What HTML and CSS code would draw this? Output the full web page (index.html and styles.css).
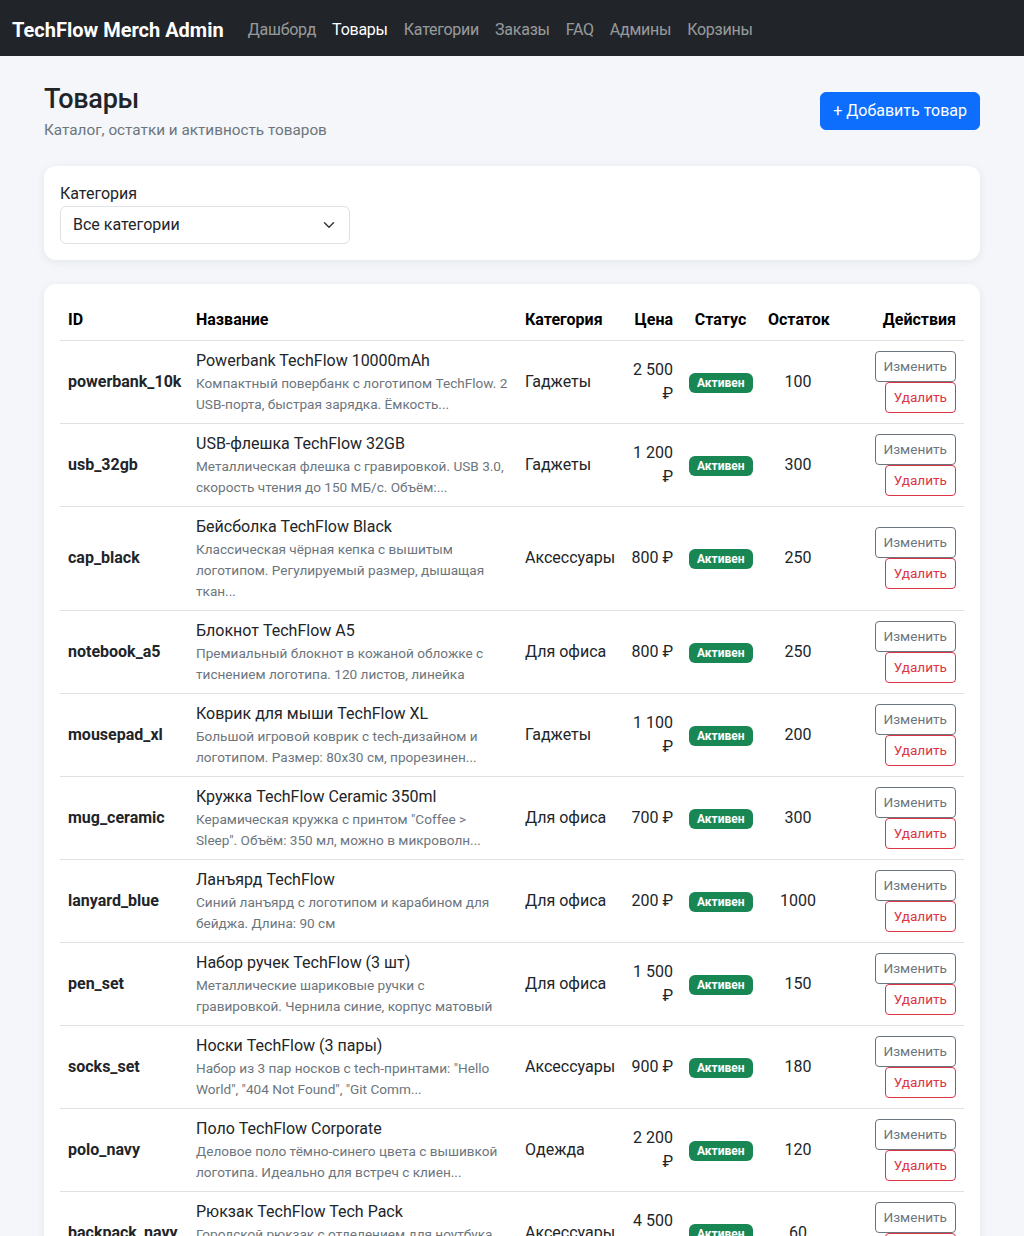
FILE: index.html
```html
<!DOCTYPE html>
<html lang="ru">
<head>
<meta charset="utf-8">
<title>TechFlow Merch Admin — Товары</title>
<link rel="stylesheet" href="styles.css">
</head>
<body>
<nav class="navbar">
  <a class="brand" href="#">TechFlow Merch Admin</a>
  <ul class="nav">
    <li><a href="#">Дашборд</a></li>
    <li><a href="#" class="active">Товары</a></li>
    <li><a href="#">Категории</a></li>
    <li><a href="#">Заказы</a></li>
    <li><a href="#">FAQ</a></li>
    <li><a href="#">Админы</a></li>
    <li><a href="#">Корзины</a></li>
  </ul>
</nav>

<main class="container">
  <header class="page-head">
    <div>
      <h1 class="page-title">Товары</h1>
      <p class="page-sub">Каталог, остатки и активность товаров</p>
    </div>
    <button class="btn-primary">+ Добавить товар</button>
  </header>

  <section class="card filter-card">
    <label class="form-label">Категория</label>
    <div class="select-box">
      <span>Все категории</span>
      <svg class="chev" width="16" height="12" viewBox="0 0 16 16"><path d="m2 5 6 6 6-6" fill="none" stroke="#343a40" stroke-width="2" stroke-linecap="round" stroke-linejoin="round"/></svg>
    </div>
  </section>

  <section class="card table-card">
    <table class="table">
      <colgroup>
        <col class="c-id"><col class="c-name"><col class="c-cat"><col class="c-price"><col class="c-status"><col class="c-stock"><col class="c-act">
      </colgroup>
      <thead>
        <tr><th>ID</th><th>Название</th><th>Категория</th><th class="end price">Цена</th><th class="center">Статус</th><th class="center">Остаток</th><th class="end">Действия</th></tr>
      </thead>
      <tbody>
        <tr>
          <td class="id">powerbank_10k</td>
          <td><div class="pname">Powerbank TechFlow 10000mAh</div><div class="pdesc">Компактный повербанк с логотипом TechFlow. 2 USB-порта, быстрая зарядка. Ёмкость...</div></td>
          <td>Гаджеты</td><td class="end price">2&nbsp;500 ₽</td>
          <td class="center"><span class="badge">Активен</span></td><td class="center">100</td>
          <td class="end"><div class="acts"><button class="btn-sm edit">Изменить</button><button class="btn-sm del">Удалить</button></div></td>
        </tr>
        <tr>
          <td class="id">usb_32gb</td>
          <td><div class="pname">USB-флешка TechFlow 32GB</div><div class="pdesc">Металлическая флешка с гравировкой. USB 3.0, скорость чтения до 150 МБ/с. Объём:...</div></td>
          <td>Гаджеты</td><td class="end price">1&nbsp;200 ₽</td>
          <td class="center"><span class="badge">Активен</span></td><td class="center">300</td>
          <td class="end"><div class="acts"><button class="btn-sm edit">Изменить</button><button class="btn-sm del">Удалить</button></div></td>
        </tr>
        <tr>
          <td class="id">cap_black</td>
          <td><div class="pname">Бейсболка TechFlow Black</div><div class="pdesc">Классическая чёрная кепка с вышитым логотипом. Регулируемый размер, дышащая ткан...</div></td>
          <td>Аксессуары</td><td class="end price">800 ₽</td>
          <td class="center"><span class="badge">Активен</span></td><td class="center">250</td>
          <td class="end"><div class="acts"><button class="btn-sm edit">Изменить</button><button class="btn-sm del">Удалить</button></div></td>
        </tr>
        <tr>
          <td class="id">notebook_a5</td>
          <td><div class="pname">Блокнот TechFlow A5</div><div class="pdesc">Премиальный блокнот в кожаной обложке с тиснением логотипа. 120 листов, линейка</div></td>
          <td>Для офиса</td><td class="end price">800 ₽</td>
          <td class="center"><span class="badge">Активен</span></td><td class="center">250</td>
          <td class="end"><div class="acts"><button class="btn-sm edit">Изменить</button><button class="btn-sm del">Удалить</button></div></td>
        </tr>
        <tr>
          <td class="id">mousepad_xl</td>
          <td><div class="pname">Коврик для мыши TechFlow XL</div><div class="pdesc">Большой игровой коврик с tech-дизайном и логотипом. Размер: 80x30 см, прорезинен...</div></td>
          <td>Гаджеты</td><td class="end price">1&nbsp;100 ₽</td>
          <td class="center"><span class="badge">Активен</span></td><td class="center">200</td>
          <td class="end"><div class="acts"><button class="btn-sm edit">Изменить</button><button class="btn-sm del">Удалить</button></div></td>
        </tr>
        <tr>
          <td class="id">mug_ceramic</td>
          <td><div class="pname">Кружка TechFlow Ceramic 350ml</div><div class="pdesc">Керамическая кружка с принтом "Coffee &gt; Sleep". Объём: 350 мл, можно в микроволн...</div></td>
          <td>Для офиса</td><td class="end price">700 ₽</td>
          <td class="center"><span class="badge">Активен</span></td><td class="center">300</td>
          <td class="end"><div class="acts"><button class="btn-sm edit">Изменить</button><button class="btn-sm del">Удалить</button></div></td>
        </tr>
        <tr>
          <td class="id">lanyard_blue</td>
          <td><div class="pname">Ланъярд TechFlow</div><div class="pdesc">Синий ланъярд с логотипом и карабином для бейджа. Длина: 90 см</div></td>
          <td>Для офиса</td><td class="end price">200 ₽</td>
          <td class="center"><span class="badge">Активен</span></td><td class="center">1000</td>
          <td class="end"><div class="acts"><button class="btn-sm edit">Изменить</button><button class="btn-sm del">Удалить</button></div></td>
        </tr>
        <tr>
          <td class="id">pen_set</td>
          <td><div class="pname">Набор ручек TechFlow (3 шт)</div><div class="pdesc">Металлические шариковые ручки с гравировкой. Чернила синие, корпус матовый</div></td>
          <td>Для офиса</td><td class="end price">1&nbsp;500 ₽</td>
          <td class="center"><span class="badge">Активен</span></td><td class="center">150</td>
          <td class="end"><div class="acts"><button class="btn-sm edit">Изменить</button><button class="btn-sm del">Удалить</button></div></td>
        </tr>
        <tr>
          <td class="id">socks_set</td>
          <td><div class="pname">Носки TechFlow (3 пары)</div><div class="pdesc">Набор из 3 пар носков с tech-принтами: "Hello World", "404 Not Found", "Git Comm...</div></td>
          <td>Аксессуары</td><td class="end price">900 ₽</td>
          <td class="center"><span class="badge">Активен</span></td><td class="center">180</td>
          <td class="end"><div class="acts"><button class="btn-sm edit">Изменить</button><button class="btn-sm del">Удалить</button></div></td>
        </tr>
        <tr>
          <td class="id">polo_navy</td>
          <td><div class="pname">Поло TechFlow Corporate</div><div class="pdesc">Деловое поло тёмно-синего цвета с вышивкой логотипа. Идеально для встреч с клиен...</div></td>
          <td>Одежда</td><td class="end price">2&nbsp;200 ₽</td>
          <td class="center"><span class="badge">Активен</span></td><td class="center">120</td>
          <td class="end"><div class="acts"><button class="btn-sm edit">Изменить</button><button class="btn-sm del">Удалить</button></div></td>
        </tr>
        <tr>
          <td class="id">backpack_navy</td>
          <td><div class="pname">Рюкзак TechFlow Tech Pack</div><div class="pdesc">Городской рюкзак с отделением для ноутбука 15.6". Водоотталкивающая ткан...</div></td>
          <td>Аксессуары</td><td class="end price">4&nbsp;500 ₽</td>
          <td class="center"><span class="badge">Активен</span></td><td class="center">60</td>
          <td class="end"><div class="acts"><button class="btn-sm edit">Изменить</button><button class="btn-sm del">Удалить</button></div></td>
        </tr>
      </tbody>
    </table>
  </section>
</main>
</body>
</html>
```
FILE: styles.css
```css
* { box-sizing: border-box; }
html, body { margin: 0; }
body {
  font-family: Roboto, "Noto Sans", sans-serif;
  font-size: 16px;
  line-height: 1.5;
  color: #212529;
  background: #f4f6f9;
}
.navbar {
  background: #212529;
  height: 56px;
  display: flex;
  align-items: center;
  padding: 3px 12px 0;
}
.brand {
  color: #fff;
  font-weight: 700;
  font-size: 20px;
  text-decoration: none;
  margin-right: 16px;
  line-height: 30px;
}
.nav {
  list-style: none;
  margin: 0;
  padding: 0;
  display: flex;
}
.nav a {
  display: block;
  padding: 8px;
  color: rgba(255,255,255,.55);
  text-decoration: none;
  letter-spacing: -0.25px;
}
.nav a.active { color: #fff; }

.container {
  width: 960px;
  margin: 0 auto;
  padding: 24px 12px;
}
.page-head {
  display: flex;
  justify-content: space-between;
  align-items: center;
  margin-bottom: 24px;
}
.page-title {
  margin: 0 0 1px;
  padding-top: 3px;
  font-size: 27px;
  font-weight: 500;
  line-height: 33.6px;
  letter-spacing: -0.3px;
}
.page-sub {
  margin: 0;
  color: #6c757d;
  font-size: 15.3px;
  line-height: 24px;
}
.btn-primary {
  font-family: inherit;
  font-size: 16px;
  line-height: 24px;
  padding: 6px 12px;
  color: #fff;
  background: #0d6efd;
  border: 1px solid #0d6efd;
  border-radius: 6px;
}
.card {
  background: #fff;
  border-radius: 12px;
  box-shadow: 0 2px 10px rgba(20, 30, 60, 0.07);
  padding: 16px;
  margin-bottom: 24px;
}
.form-label {
  display: block;
  font-size: 16px;
  line-height: 24px;
  margin: 0;
}
.select-box {
  width: 290px;
  height: 38px;
  border: 1px solid #dee2e6;
  border-radius: 6px;
  padding: 0 12px 0 12px;
  display: flex;
  align-items: center;
  justify-content: space-between;
  font-size: 16px;
}
.chev { display: block; }
.table {
  width: 100%;
  table-layout: fixed;
  border-collapse: collapse;
}
.c-id { width: 128px; }
.c-name { width: 329px; }
.c-cat { width: 107px; }
.c-price { width: 57px; }
.c-status { width: 79px; }
.c-stock { width: 76px; }
.c-act { width: 128px; }
.table th, .table td {
  padding: 8px;
  border-bottom: 1px solid #dee2e6;
  vertical-align: middle;
  text-align: left;
}
.table th { font-weight: 700; color: #000; }
.table .end { text-align: right; }
.table .center { text-align: center; }
.table .price { padding-left: 3px; }
.id { font-weight: 700; }
.pname { font-size: 16px; line-height: 24px; }
.pdesc { font-size: 13.6px; line-height: 21px; color: #6c757d; }
.badge {
  display: inline-block;
  background: #198754;
  color: #fff;
  font-size: 12px;
  font-weight: 700;
  line-height: 1;
  padding: 4px 8px;
  border-radius: 6px;
}
.acts {
  display: flex;
  flex-direction: column;
  align-items: flex-end;
}
.btn-sm {
  font-family: inherit;
  font-size: 13.6px;
  line-height: 21px;
  padding: 4px 8px;
  background: #fff;
  border-radius: 4px;
}
.edit { color: #6c757d; border: 1px solid #6c757d; }
.del { color: #dc3545; border: 1px solid #dc3545; }
```
